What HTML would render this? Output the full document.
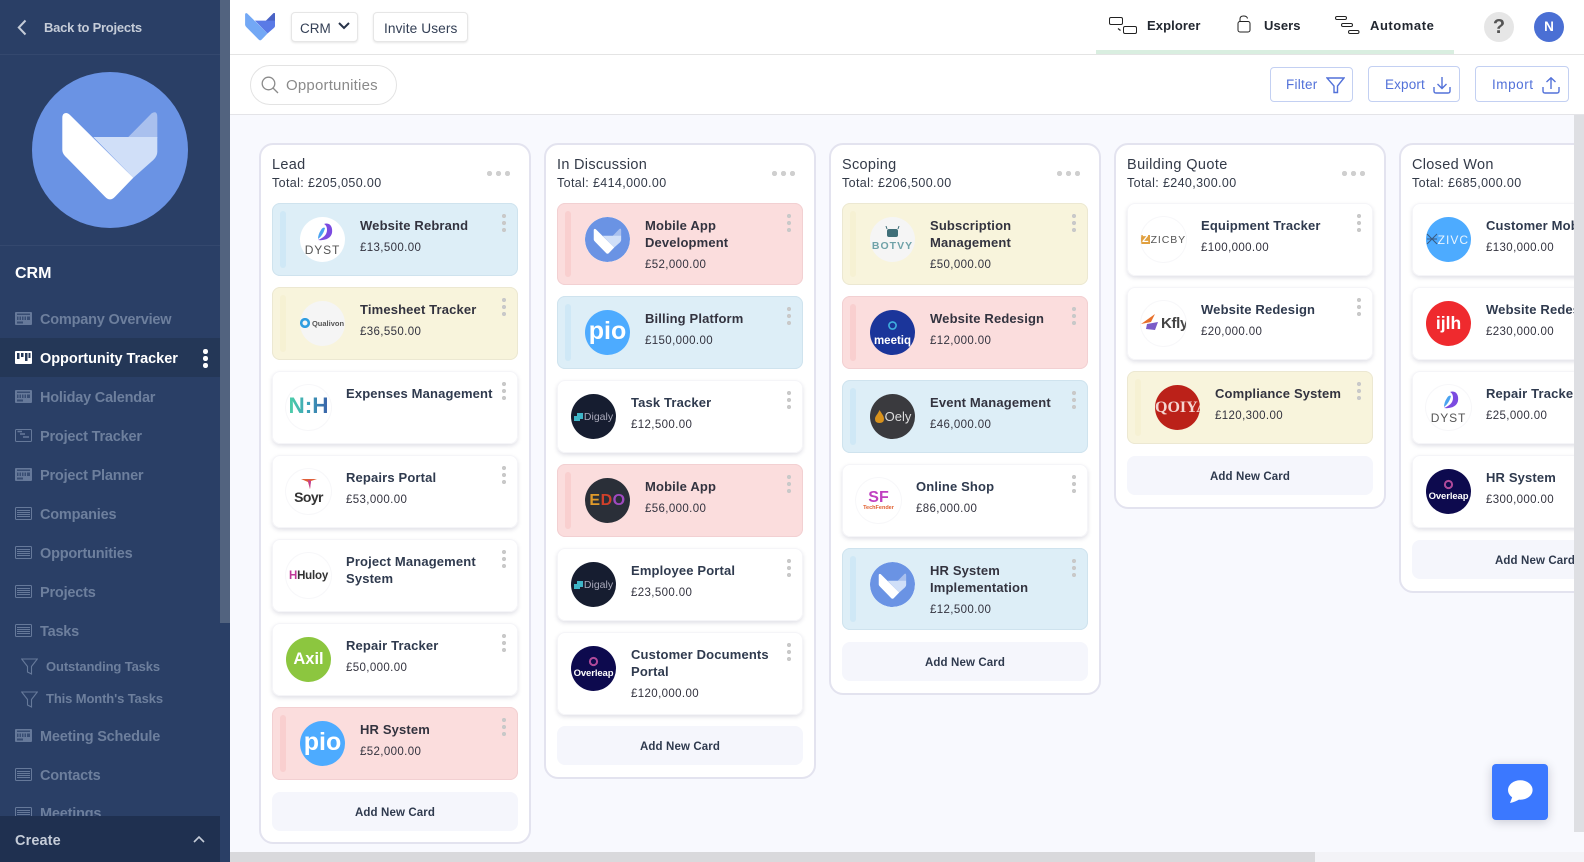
<!DOCTYPE html>
<html><head><meta charset="utf-8"><style>
*{box-sizing:border-box}
html,body{margin:0;padding:0;width:1584px;height:862px;overflow:hidden;background:#f8f9fe;font-family:"Liberation Sans",sans-serif;color:#2f3a4e}
.a{position:absolute}
#board{position:absolute;left:0;top:0;width:1574px;height:862px;overflow:hidden}
.col{position:absolute;top:143px;width:272px;background:#fff;border:2px solid #e3e3ef;border-radius:14px}
.h1{position:absolute;top:156px;font-size:14.5px;line-height:18px;letter-spacing:.3px;color:#333a48;white-space:nowrap}
.h2{position:absolute;top:175px;font-size:12.5px;line-height:16px;letter-spacing:.37px;color:#333a48;white-space:nowrap}
.more{position:absolute;top:171px;width:23px;height:5px;background:radial-gradient(circle at 2.5px 2.5px,#cfcfcf 2.4px,transparent 2.8px) 0 0/9px 5px repeat-x}
.g{position:absolute;top:0;width:246px;height:0}
.k{position:absolute;left:0;width:246px;border-radius:8px;background:#fff;box-shadow:0 2px 4px rgba(20,20,70,.13),inset 0 0 0 1px #f5f5f8}
.b{background:#ddeef7;box-shadow:inset 0 0 0 1px #cfe3ee}
.y{background:#f8f4dc;box-shadow:inset 0 0 0 1px #ece8d2}
.r{background:#fbdddd;box-shadow:inset 0 0 0 1px #f2d0d2}
.bar{position:absolute;left:8px;top:8px;bottom:8px;width:6px;border-radius:3px}
.b .bar{background:#cfe8f6}.y .bar{background:#f6f1d3}.r .bar{background:#f9cfcf}
.l{position:absolute;left:14px;top:14px;width:45px;height:45px;border-radius:50%;overflow:hidden;display:flex;align-items:center;justify-content:center;font-weight:bold;background:#fff;white-space:nowrap;text-align:center}
.b .l,.y .l,.r .l{left:28px}
.e{box-shadow:0 0 0 1px #f7f7f9}
.x{position:absolute;left:74px;top:14px;white-space:nowrap}
.b .x,.y .x,.r .x{left:88px}
.n{font-size:13px;line-height:17px;font-weight:bold;letter-spacing:.15px;color:#2f3a4e}
.b .n,.y .n,.r .n{color:#33333f}
.p{font-size:11.5px;line-height:16px;margin-top:6px;letter-spacing:.37px;color:#33333f}
.d{position:absolute;left:230px;top:11px;width:4px;height:18px;background:radial-gradient(circle at 2px 2px,#c9c9c9 1.9px,transparent 2.3px) 0 0/4px 7px repeat-y}
.add{position:absolute;left:0;width:246px;height:39px;border-radius:8px;background:#f5f6fc;font-size:11.5px;line-height:43px;font-weight:bold;text-align:center;letter-spacing:.12px;color:#2f3a4e}
#side{position:absolute;left:0;top:0;width:220px;height:862px;background:#2a3f66;overflow:hidden}
.m{position:absolute;left:40px;font-size:14.5px;line-height:20px;font-weight:bold;color:#6d7f9d;letter-spacing:-.2px;white-space:nowrap}
.s{font-size:13px;left:46px;letter-spacing:-.12px}
.ic{position:absolute;left:15px;width:17px;height:13px}
.btn{position:absolute;background:#fff;border:1px solid #c3d0f2;border-radius:4px;font-size:13.5px;color:#5271d9;letter-spacing:.25px;white-space:nowrap}
.top{position:absolute;top:17px;font-size:13px;line-height:18px;font-weight:bold;color:#222730;letter-spacing:.1px}
.tb{position:absolute;top:12px;height:30px;background:#fff;border:1px solid #e6e6e6;border-radius:4px;box-shadow:0 1px 2px rgba(0,0,0,.1);font-size:13.7px;line-height:31px;color:#333f55;letter-spacing:.15px;white-space:nowrap}
</style></head><body>
<svg width="0" height="0" style="position:absolute"><defs>
<symbol id="fox" viewBox="0 0 156 156"><circle cx="78" cy="78" r="78" fill="#6a93e4"/><path d="M96.3 65L119.7 41.3Q125.3 38 125.3 45V66H96.3Z" fill="#a9c0ee"/><path d="M61.3 65H125.3V79.7Q125.3 84 121.3 88L101.3 105.7Z" fill="#d0dff8"/><path d="M30.3 46Q30.3 41 34 41Q36 41 38 43L101.3 105.7L83 124.7Q78 130 73 124.7L35 86Q30.3 82 30.3 78Z" fill="#fff"/></symbol>
<symbol id="dy" viewBox="0 0 45 45"><path d="M24 7C30 5 33 10 32 16C31 21 25 24 18 23C23 21 27 18 27 13C27 10 26 8 24 7Z" fill="#7b4be0"/><path d="M21 13C22 11 24 10 25 11C24 15 22 19 18 22C18 19 19 16 21 13Z" fill="#4aa3f0"/></symbol>
<symbol id="gr" viewBox="0 0 17 13"><rect x=".5" y=".5" width="16" height="12" rx="1" fill="none" stroke="#66799a"/><path d="M2 3.5H15M2 5.5H15M2 7.5H15M2 9.5H15" stroke="#66799a" stroke-width=".9"/></symbol>
<symbol id="cal" viewBox="0 0 17 13"><rect x="0" y="0" width="17" height="13" rx="1" fill="#66799a"/><path d="M2 1.5H15V3H2ZM2 4.5H15V8H2ZM2 9.5H8V11.5H2Z" fill="#2a3f66" opacity=".75"/><path d="M4 4.5V8M6.5 4.5V8M9 4.5V8M11.5 4.5V8" stroke="#66799a"/></symbol>
<symbol id="fun" viewBox="0 0 17 17"><path d="M.7 1H16.3L10.5 8.5V16L6.5 14V8.5Z" fill="none" stroke="#66799a" stroke-width="1.1"/></symbol>
<symbol id="dig" viewBox="0 0 9 8"><path d="M3 0H9V6H6V8H0V3H3Z" fill="#3fb6c8"/></symbol>
</defs></svg>
<div id="board">
<div class="col" style="left:259px;height:701px"></div>
<div class="col" style="left:544px;height:636px"></div>
<div class="col" style="left:829px;height:552px"></div>
<div class="col" style="left:1114px;height:366px"></div>
<div class="col" style="left:1399px;height:450px"></div>
<div class="h1" style="left:272px">Lead</div><div class="h2" style="left:272px">Total: £205,050.00</div><div class="more" style="left:487px"></div>
<div class="h1" style="left:557px">In Discussion</div><div class="h2" style="left:557px">Total: £414,000.00</div><div class="more" style="left:772px"></div>
<div class="h1" style="left:842px">Scoping</div><div class="h2" style="left:842px">Total: £206,500.00</div><div class="more" style="left:1057px"></div>
<div class="h1" style="left:1127px;letter-spacing:.4px">Building Quote</div><div class="h2" style="left:1127px">Total: £240,300.00</div><div class="more" style="left:1342px"></div>
<div class="h1" style="left:1412px">Closed Won</div><div class="h2" style="left:1412px">Total: £685,000.00</div>

<div class="g" style="left:272px">
<div class="k b" style="top:203px;height:73px"><div class="bar"></div><div class="l"><svg class="a" style="left:0;top:0" width="45" height="45"><use href="#dy"/></svg><span style="position:absolute;top:26px;left:0;width:45px;font-size:12px;font-weight:normal;letter-spacing:.9px;color:#555">DYST</span></div><div class="x"><div class="n">Website Rebrand</div><div class="p">£13,500.00</div></div><div class="d"></div></div>
<div class="k y" style="top:287px;height:73px"><div class="bar"></div><div class="l" style="background:#f5f5f5"><svg class="a" style="left:0;top:17px" width="10" height="10"><circle cx="5" cy="5" r="3.8" fill="none" stroke="#2f9de0" stroke-width="2.6"/></svg><span style="font-size:7.5px;color:#555;margin-left:11px">Qualivon</span></div><div class="x"><div class="n">Timesheet Tracker</div><div class="p">£36,550.00</div></div><div class="d"></div></div>
<div class="k" style="top:371px;height:73px"><div class="l e"><span style="font-size:22.5px;margin-top:-3px;background:linear-gradient(90deg,#4ed0a8,#3ca0b8 50%,#3a5ea8);-webkit-background-clip:text;color:transparent">N:H</span></div><div class="x"><div class="n">Expenses Management</div></div><div class="d"></div></div>
<div class="k" style="top:455px;height:73px"><div class="l e"><svg class="a" style="left:14px;top:8px" width="18" height="14"><path d="M1 2H17L11 4L10 12L8 5Z" fill="#e0603a"/><path d="M8 3L10 12L11 4Z" fill="#c03a9a"/></svg><span style="font-size:14px;color:#333;margin-top:11px;letter-spacing:-.6px">Soyr</span></div><div class="x"><div class="n">Repairs Portal</div><div class="p">£53,000.00</div></div><div class="d"></div></div>
<div class="k" style="top:539px;height:73px"><div class="l e"><span style="font-size:11.5px;color:#333;letter-spacing:-.2px"><span style="color:#c0399a">H</span>Huloy</span></div><div class="x"><div class="n">Project Management<br>System</div><div class="p"></div></div><div class="d"></div></div>
<div class="k" style="top:623px;height:73px"><div class="l" style="background:#8cc63f;color:#fff;font-size:16.5px">Axil</div><div class="x"><div class="n">Repair Tracker</div><div class="p">£50,000.00</div></div><div class="d"></div></div>
<div class="k r" style="top:707px;height:73px"><div class="bar"></div><div class="l" style="background:#4dabff;color:#fff;font-size:25px;padding-bottom:3px">pio</div><div class="x"><div class="n">HR System</div><div class="p">£52,000.00</div></div><div class="d"></div></div>
<div class="add" style="top:792px">Add New Card</div>
</div>

<div class="g" style="left:557px">
<div class="k r" style="top:203px;height:82px"><div class="bar"></div><svg class="l" viewBox="0 0 156 156"><use href="#fox"/></svg><div class="x"><div class="n">Mobile App<br>Development</div><div class="p">£52,000.00</div></div><div class="d"></div></div>
<div class="k b" style="top:296px;height:73px"><div class="bar"></div><div class="l" style="background:#4dabff;color:#fff;font-size:25px;padding-bottom:3px">pio</div><div class="x"><div class="n">Billing Platform</div><div class="p">£150,000.00</div></div><div class="d"></div></div>
<div class="k" style="top:380px;height:73px"><div class="l" style="background:#161d30;color:#aab;font-size:10.5px;font-weight:normal"><svg width="9" height="8" style="margin-right:1px"><use href="#dig"/></svg>Digaly</div><div class="x"><div class="n">Task Tracker</div><div class="p">£12,500.00</div></div><div class="d"></div></div>
<div class="k r" style="top:464px;height:73px"><div class="bar"></div><div class="l" style="background:#2a2f38;font-size:16px;letter-spacing:.5px"><span style="color:#e09a2a">E</span><span style="color:#d0402a">D</span><span style="color:#a04ac0">O</span></div><div class="x"><div class="n">Mobile App</div><div class="p">£56,000.00</div></div><div class="d"></div></div>
<div class="k" style="top:548px;height:73px"><div class="l" style="background:#161d30;color:#aab;font-size:10.5px;font-weight:normal"><svg width="9" height="8" style="margin-right:1px"><use href="#dig"/></svg>Digaly</div><div class="x"><div class="n">Employee Portal</div><div class="p">£23,500.00</div></div><div class="d"></div></div>
<div class="k" style="top:632px;height:83px"><div class="l" style="background:#0d0a4e;color:#fff;font-size:9.5px;padding-top:9px;letter-spacing:-.1px">Overleap<svg class="a" style="left:17px;top:10px" width="11" height="11"><circle cx="5.5" cy="5.5" r="3.6" fill="none" stroke="#b04a9a" stroke-width="2"/></svg></div><div class="x"><div class="n">Customer Documents<br>Portal</div><div class="p">£120,000.00</div></div><div class="d"></div></div>
<div class="add" style="top:726px">Add New Card</div>
</div>

<div class="g" style="left:842px">
<div class="k y" style="top:203px;height:82px"><div class="bar"></div><div class="l" style="background:#f5f5f5;color:#6fa2a8;font-size:10.5px;letter-spacing:1px;padding-top:13px">BOTVY<svg class="a" style="left:15px;top:9px" width="15" height="12"><rect x="2" y="3" width="11" height="8" rx="2" fill="#3f6f78"/><path d="M2 3L1 0M13 3L14 0" stroke="#3f6f78"/></svg></div><div class="x"><div class="n">Subscription<br>Management</div><div class="p">£50,000.00</div></div><div class="d"></div></div>
<div class="k r" style="top:296px;height:73px"><div class="bar"></div><div class="l" style="background:#1b359a;color:#fff;font-size:11.5px;padding-top:16px">meetiq<svg class="a" style="left:17px;top:10px" width="11" height="11"><circle cx="5.5" cy="5.5" r="3.6" fill="none" stroke="#3fb0e0" stroke-width="1.6"/></svg></div><div class="x"><div class="n">Website Redesign</div><div class="p">£12,000.00</div></div><div class="d"></div></div>
<div class="k b" style="top:380px;height:73px"><div class="bar"></div><div class="l" style="background:#3a3a3e;color:#ddd;font-size:13px;font-weight:normal;padding-left:11px">Oely<svg class="a" style="left:5px;top:16px" width="9" height="13"><path d="M4.5 0C7 4 9 6 9 9Q9 13 4.5 13Q0 13 0 9C0 6 3 4 4.5 0Z" fill="#d9921c"/></svg></div><div class="x"><div class="n">Event Management</div><div class="p">£46,000.00</div></div><div class="d"></div></div>
<div class="k" style="top:464px;height:73px"><div class="l e" style="font-size:16px;color:#c040c0;flex-direction:column;line-height:15px">SF<span style="font-size:5.5px;line-height:7px;color:#e06030">TechFender</span></div><div class="x"><div class="n">Online Shop</div><div class="p">£86,000.00</div></div><div class="d"></div></div>
<div class="k b" style="top:548px;height:82px"><div class="bar"></div><svg class="l" viewBox="0 0 156 156"><use href="#fox"/></svg><div class="x"><div class="n">HR System<br>Implementation</div><div class="p">£12,500.00</div></div><div class="d"></div></div>
<div class="add" style="top:642px">Add New Card</div>
</div>

<div class="g" style="left:1127px">
<div class="k" style="top:203px;height:73px"><div class="l e" style="font-size:10.5px;font-weight:normal;letter-spacing:.9px;color:#555;justify-content:flex-end"><span style="background:#e0a040;color:#fff;font-weight:bold;line-height:9px;padding:0 1px;letter-spacing:0;margin-right:1px">Z</span>ZICBY</div><div class="x"><div class="n">Equipment Tracker</div><div class="p">£100,000.00</div></div><div class="d"></div></div>
<div class="k" style="top:287px;height:73px"><div class="l e" style="font-size:15px;color:#444;padding-left:22px;letter-spacing:-.3px"><svg class="a" style="left:0;top:12px" width="22" height="19"><path d="M0 11L14 1L10 9Z" fill="#e8702a"/><path d="M6 11L17 9L14 17L5 16Z" fill="#7a5cc8"/></svg>Kfly</div><div class="x"><div class="n">Website Redesign</div><div class="p">£20,000.00</div></div><div class="d"></div></div>
<div class="k y" style="top:371px;height:73px"><div class="bar"></div><div class="l" style="background:#bb2119;color:#f4d4d0;font:bold 16px 'Liberation Serif',serif;justify-content:flex-start">QOIYA</div><div class="x"><div class="n">Compliance System</div><div class="p">£120,300.00</div></div><div class="d"></div></div>
<div class="add" style="top:456px">Add New Card</div>
</div>

<div class="g" style="left:1412px">
<div class="k" style="top:203px;height:73px"><div class="l" style="background:#4dabff;color:#e8f4ff;font-size:12px;font-weight:normal;letter-spacing:1px;justify-content:flex-end;padding-right:2px">ZIVC<svg class="a" style="left:0;top:16px" width="12" height="12"><path d="M1 1L11 11M11 1L1 11M1 6H11" stroke="#3a5a80"/></svg></div><div class="x"><div class="n">Customer Mobile App</div><div class="p">£130,000.00</div></div><div class="d"></div></div>
<div class="k" style="top:287px;height:73px"><div class="l" style="background:#ef2a2e;color:#fff;font-size:17.5px">ijlh</div><div class="x"><div class="n">Website Redesign</div><div class="p">£230,000.00</div></div><div class="d"></div></div>
<div class="k" style="top:371px;height:73px"><div class="l e"><svg class="a" style="left:0;top:0" width="45" height="45"><use href="#dy"/></svg><span style="position:absolute;top:26px;left:0;width:45px;font-size:12px;font-weight:normal;letter-spacing:.9px;color:#555">DYST</span></div><div class="x"><div class="n">Repair Tracker</div><div class="p">£25,000.00</div></div><div class="d"></div></div>
<div class="k" style="top:455px;height:73px"><div class="l" style="background:#0d0a4e;color:#fff;font-size:9.5px;padding-top:9px;letter-spacing:-.1px">Overleap<svg class="a" style="left:17px;top:10px" width="11" height="11"><circle cx="5.5" cy="5.5" r="3.6" fill="none" stroke="#b04a9a" stroke-width="2"/></svg></div><div class="x"><div class="n">HR System</div><div class="p">£300,000.00</div></div><div class="d"></div></div>
<div class="add" style="top:540px">Add New Card</div>
</div>
</div>

<div class="a" style="left:230px;top:0;width:1354px;background:#fff;border-bottom:1px solid #e4e4e4;height:55px"></div>
<div class="a" style="left:230px;top:55px;width:1354px;height:60px;background:#fff;border-bottom:1px solid #e4e4e8"></div>
<svg class="a" style="left:245px;top:13px" width="30" height="28" viewBox="30 41 95 88"><path d="M96.3 65L119.7 41.3Q125.3 38 125.3 45V66H96.3Z" fill="#4a63c5"/><path d="M61.3 65H125.3V79.7Q125.3 84 121.3 88L101.3 105.7Z" fill="#5a7ae6"/><path d="M30.3 46Q30.3 41 34 41Q36 41 38 43L101.3 105.7L83 124.7Q78 130 73 124.7L35 86Q30.3 82 30.3 78Z" fill="#73a8f5"/></svg>
<div class="tb" style="left:291px;width:67px;padding-left:8px;font-size:13.5px;letter-spacing:0">CRM<svg class="a" style="left:46px;top:9px" width="12" height="8"><path d="M1 1L6 6L11 1" fill="none" stroke="#263248" stroke-width="2"/></svg></div>
<div class="tb" style="left:373px;width:95px;padding-left:10px;letter-spacing:.1px">Invite Users</div>
<div class="a" style="left:250px;top:65px;width:147px;height:40px;border:1px solid #e3e3e3;border-radius:20px;background:#fff;font-size:15px;line-height:40px;color:#8a8a8a;padding-left:35px;letter-spacing:.2px">Opportunities<svg class="a" style="left:10px;top:10px" width="18" height="18"><circle cx="7.5" cy="7.5" r="6.3" fill="none" stroke="#8a8a8a" stroke-width="1.3"/><path d="M12 12L17 17" stroke="#8a8a8a" stroke-width="1.3"/></svg></div>

<svg class="a" style="left:1109px;top:16px" width="28" height="18" fill="none" stroke="#222" stroke-width="1"><rect x=".5" y="1.5" width="13" height="7" rx="1.5"/><rect x="14.5" y="10.5" width="13" height="7" rx="1.5"/><path d="M9 12.5L11.5 14.5" stroke-width="1.2"/></svg>
<div class="top" style="left:1147px">Explorer</div>
<svg class="a" style="left:1237px;top:15px" width="14" height="18" fill="none" stroke="#222" stroke-width="1"><rect x="1" y="6.5" width="12" height="10.5" rx="2"/><path d="M3 6.5V4Q3 1 6.5 1Q10 1 10.5 3.5"/></svg>
<div class="top" style="left:1264px">Users</div>
<svg class="a" style="left:1335px;top:15px" width="25" height="19" fill="none" stroke="#222" stroke-width="1"><rect x=".5" y="1.5" width="11" height="3" rx="1.5"/><rect x="6.5" y="8.5" width="11" height="3" rx="1.5"/><rect x="13.5" y="15.5" width="10.5" height="3" rx="1.5"/></svg>
<div class="top" style="left:1370px;letter-spacing:.55px">Automate</div>
<div class="a" style="left:1096px;top:50px;width:358px;height:4px;background:#d9eee0"></div>
<div class="a" style="left:1484px;top:12px;width:30px;height:30px;border-radius:50%;background:#e6e6e6;font-size:20px;line-height:30px;font-weight:bold;text-align:center;color:#555">?</div>
<div class="a" style="left:1534px;top:12px;width:30px;height:30px;border-radius:50%;background:#4a6fd4;font-size:13.5px;line-height:30px;font-weight:bold;text-align:center;color:#fff">N</div>

<div class="btn" style="left:1270px;top:67px;width:83px;height:35px;line-height:33px;padding-left:15px">Filter<svg class="a" style="left:55px;top:9px" width="19" height="17" fill="none" stroke="#5271d9" stroke-width="1.4"><path d="M1 1H18L11.5 9V15.5H8L8 9Z"/></svg></div>
<div class="btn" style="left:1368px;top:66px;width:92px;height:36px;line-height:36px;padding-left:16px;letter-spacing:.15px">Export<svg class="a" style="left:64px;top:10px" width="18" height="17" fill="none" stroke="#5271d9" stroke-width="1.4"><path d="M9 0V11M4.5 7L9 11.5L13.5 7M1 10V14Q1 16 3 16H15Q17 16 17 14V10"/></svg></div>
<div class="btn" style="left:1475px;top:66px;width:94px;height:36px;line-height:36px;padding-left:16px;letter-spacing:.55px">Import<svg class="a" style="left:66px;top:10px" width="18" height="17" fill="none" stroke="#5271d9" stroke-width="1.4"><path d="M9 12V1M4.5 5L9 .8L13.5 5M1 10V14Q1 16 3 16H15Q17 16 17 14V10"/></svg></div>

<div class="a" style="left:1574px;top:115px;width:10px;height:717px;background:#dedfe3"></div>
<div class="a" style="left:230px;top:852px;width:1354px;height:10px;background:#f3f3f7"></div>
<div class="a" style="left:230px;top:852px;width:1085px;height:10px;background:#d9d9dc"></div>
<div class="a" style="left:1492px;top:764px;width:56px;height:56px;background:#3b78ff;border-radius:4px;box-shadow:0 2px 10px rgba(30,30,60,.22)"><svg class="a" style="left:15px;top:16px" width="26" height="24"><ellipse cx="13.3" cy="10" rx="12.3" ry="9.7" fill="#fff"/><path d="M6 15L3 23Q8 22 13 19Z" fill="#fff"/></svg></div>

<div class="a" style="left:220px;top:0;width:10px;height:862px;background:#2a3f66"></div>
<div class="a" style="left:220px;top:0;width:10px;height:623px;background:#52637f"></div>
<div id="side">
<svg class="a" style="left:17px;top:19px" width="10" height="17" fill="none" stroke="#c5ccd8" stroke-width="2"><path d="M8.5 1.5L1.8 8.5L8.5 15.5"/></svg>
<div class="a" style="left:44px;top:19px;font-size:13px;line-height:18px;font-weight:bold;color:#c5ccd8;white-space:nowrap;letter-spacing:-.25px">Back to Projects</div>
<div class="a" style="left:0;top:54px;width:220px;height:1px;background:#34486e"></div>
<svg class="a" style="left:32px;top:72px" width="156" height="156"><use href="#fox"/></svg>
<div class="a" style="left:0;top:245px;width:220px;height:1px;background:#34486e"></div>
<div class="a" style="left:15px;top:264px;font-size:16px;line-height:20px;font-weight:bold;color:#fff">CRM</div>
<div class="a" style="left:0;top:338px;width:220px;height:39px;background:#243757"></div>
<svg class="ic" style="top:312px"><use href="#cal"/></svg><div class="m" style="top:310px">Company Overview</div>
<svg class="ic" style="top:351px" viewBox="0 0 17 13"><rect width="17" height="13" rx="1" fill="#fff"/><path d="M2 2H4.5V8H2ZM6 2H8.5V6H6ZM10 2H12.5V10H10ZM13.5 2H15.5V7H13.5Z" fill="#243757"/></svg><div class="m" style="top:349px;color:#fff;letter-spacing:-.04px">Opportunity Tracker</div>
<div class="a" style="left:203px;top:349px;width:4.5px;height:4.5px;border-radius:50%;background:#fff"></div><div class="a" style="left:203px;top:356px;width:4.5px;height:4.5px;border-radius:50%;background:#fff"></div><div class="a" style="left:203px;top:363px;width:4.5px;height:4.5px;border-radius:50%;background:#fff"></div>
<svg class="ic" style="top:390px"><use href="#cal"/></svg><div class="m" style="top:388px">Holiday Calendar</div>
<svg class="ic" style="top:429px" viewBox="0 0 17 13"><rect x=".5" y=".5" width="16" height="12" rx="1" fill="none" stroke="#66799a"/><path d="M2.5 2.5H7M5 5H10M8 8H14" stroke="#66799a" stroke-width="1.6"/></svg><div class="m" style="top:427px">Project Tracker</div>
<svg class="ic" style="top:468px"><use href="#cal"/></svg><div class="m" style="top:466px">Project Planner</div>
<svg class="ic" style="top:507px"><use href="#gr"/></svg><div class="m" style="top:505px">Companies</div>
<svg class="ic" style="top:546px"><use href="#gr"/></svg><div class="m" style="top:544px">Opportunities</div>
<svg class="ic" style="top:585px"><use href="#gr"/></svg><div class="m" style="top:583px">Projects</div>
<svg class="ic" style="top:624px"><use href="#gr"/></svg><div class="m" style="top:622px">Tasks</div>
<svg class="a" style="left:21px;top:658px" width="17" height="17"><use href="#fun"/></svg><div class="m s" style="top:657px">Outstanding Tasks</div>
<svg class="a" style="left:21px;top:691px" width="17" height="17"><use href="#fun"/></svg><div class="m s" style="top:689px">This Month's Tasks</div>
<svg class="ic" style="top:729px"><use href="#cal"/></svg><div class="m" style="top:727px">Meeting Schedule</div>
<svg class="ic" style="top:768px"><use href="#gr"/></svg><div class="m" style="top:766px">Contacts</div>
<svg class="ic" style="top:807px"><use href="#gr"/></svg><div class="m" style="top:804px">Meetings</div>
<div class="a" style="left:0;top:816px;width:220px;height:46px;background:#1f3050"></div>
<div class="a" style="left:15px;top:831px;font-size:14.5px;line-height:20px;font-weight:bold;color:#c5ccd8;letter-spacing:.1px">Create</div>
<svg class="a" style="left:193px;top:835px" width="12" height="9" fill="none" stroke="#c5ccd8" stroke-width="1.6"><path d="M1 7L6 2L11 7"/></svg>
</div>
</body></html>
